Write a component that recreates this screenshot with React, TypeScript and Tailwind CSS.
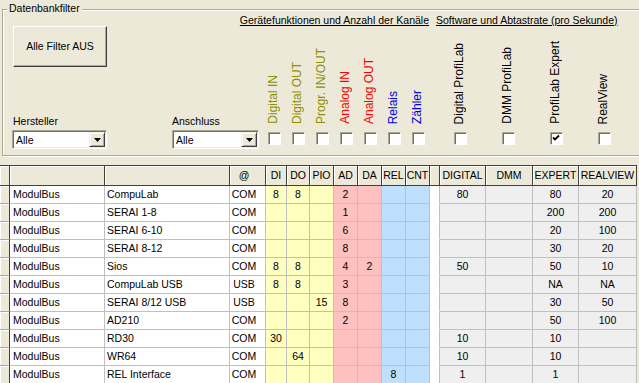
import React from "react";

type Channel = { label: string; color: string; checked?: boolean };

const hwChannels: Channel[] = [
  { label: "Digital IN", color: "text-[#8f8f00]" },
  { label: "Digital OUT", color: "text-[#8f8f00]" },
  { label: "Progr. IN/OUT", color: "text-[#8f8f00]" },
  { label: "Analog IN", color: "text-[#ff0000]" },
  { label: "Analog OUT", color: "text-[#ff0000]" },
  { label: "Relais", color: "text-[#0000e0]" },
  { label: "Zähler", color: "text-[#0000e0]" },
];

const swChannels: Channel[] = [
  { label: "Digital ProfiLab", color: "text-black" },
  { label: "DMM ProfiLab", color: "text-black" },
  { label: "ProfiLab Expert", color: "text-black", checked: true },
  { label: "RealView", color: "text-black" },
];

const headers = ["", "", "@", "DI", "DO", "PIO", "AD", "DA", "REL", "CNT", "", "DIGITAL", "DMM", "EXPERT", "REALVIEW"];

// one entry per data column (selector column not included)
const cellCls = [
  "bg-white justify-start pl-[3px]",
  "bg-white justify-start pl-[2px]",
  "bg-white justify-center pr-[7px]",
  "bg-[#ffffc0] justify-center",
  "bg-[#ffffc0] justify-center",
  "bg-[#ffffc0] justify-center",
  "bg-[#ffc0c0] justify-center",
  "bg-[#ffc0c0] justify-center",
  "bg-[#bfdfff] justify-center",
  "bg-[#bfdfff] justify-center",
  "bg-white border-b-white",
  "bg-[#efefef] justify-center",
  "bg-[#efefef] justify-center",
  "bg-[#efefef] justify-center",
  "bg-[#efefef] justify-center",
];

const rows: string[][] = [
  ["ModulBus", "CompuLab", "COM", "8", "8", "", "2", "", "", "", "", "80", "", "80", "20"],
  ["ModulBus", "SERAI 1-8", "COM", "", "", "", "1", "", "", "", "", "", "", "200", "200"],
  ["ModulBus", "SERAI 6-10", "COM", "", "", "", "6", "", "", "", "", "", "", "20", "100"],
  ["ModulBus", "SERAI 8-12", "COM", "", "", "", "8", "", "", "", "", "", "", "30", "20"],
  ["ModulBus", "Sios", "COM", "8", "8", "", "4", "2", "", "", "", "50", "", "50", "10"],
  ["ModulBus", "CompuLab USB", "USB", "8", "8", "", "3", "", "", "", "", "", "", "NA", "NA"],
  ["ModulBus", "SERAI 8/12 USB", "USB", "", "", "15", "8", "", "", "", "", "", "", "30", "50"],
  ["ModulBus", "AD210", "COM", "", "", "", "2", "", "", "", "", "", "", "50", "100"],
  ["ModulBus", "RD30", "COM", "30", "", "", "", "", "", "", "", "10", "", "10", ""],
  ["ModulBus", "WR64", "COM", "", "64", "", "", "", "", "", "", "10", "", "10", ""],
  ["ModulBus", "REL Interface", "COM", "", "", "", "", "", "8", "", "", "1", "", "1", ""],
];

const CheckBox = ({ checked }: { checked?: boolean }) => (
  <div className="h-[13px] w-[13px] border border-t-[#aca899] border-l-[#aca899] border-r-white border-b-white bg-white shadow-[inset_1px_1px_0_#716f64]">
    {checked && (
      <svg width="11" height="11" viewBox="0 0 11 11">
        <polyline points="2,4.5 4,6.5 8,2.5" fill="none" stroke="black" strokeWidth="1.8" />
      </svg>
    )}
  </div>
);

const Combo = ({ width }: { width: string }) => (
  <div
    className={`flex h-[19px] ${width} border border-t-[#aca899] border-l-[#aca899] border-r-white border-b-white bg-white shadow-[inset_1px_1px_0_#716f64,inset_-1px_-1px_0_#f1efe2]`}
  >
    <span className="pl-[3px] pt-[1px] leading-[16px]">Alle</span>
    <div className="m-[1px] ml-auto flex w-[16px] items-center justify-center border border-t-[#f1efe2] border-l-[#f1efe2] border-r-[#404040] border-b-[#404040] bg-[#ece9d8] shadow-[inset_1px_1px_0_#fff,inset_-1px_-1px_0_#aca899]">
      <svg width="7" height="4" viewBox="0 0 7 4">
        <polygon points="0,0 7,0 3.5,4" fill="black" />
      </svg>
    </div>
  </div>
);

const ChannelCell = ({ c, width }: { c: Channel; width: string }) => (
  <div className={`flex ${width} flex-col`}>
    <div className="flex h-[105px] items-end pb-[8px]">
      <span
        className={`-ml-[2px] rotate-180 whitespace-nowrap text-[12px] leading-[14px] [writing-mode:vertical-rl] ${c.color}`}
      >
        {c.label}
      </span>
    </div>
    <CheckBox checked={c.checked} />
  </div>
);

export default function App() {
  return (
    <div className="flex h-[383px] w-[639px] flex-col overflow-hidden bg-[#ece9d8] pt-[9px] font-['Liberation_Sans',Arial,sans-serif] text-[10.5px] text-black">
      {/* Datenbankfilter */}
      <div className="relative ml-[2px] h-[147px] w-[660px] shrink-0 border border-[#aca899] shadow-[inset_1px_1px_0_#fff,1px_1px_0_#fff]">
        <span className="absolute -top-[8px] left-[4px] bg-[#ece9d8] px-[2px] leading-[13px]">Datenbankfilter</span>
        <div className="flex h-full">
          <div className="flex w-[265px] shrink-0 flex-col">
            <div className="ml-[10px] mt-[16px] flex h-[41px] w-[94px] items-center justify-center border border-t-white border-l-white border-r-[#404040] border-b-[#404040] shadow-[inset_-1px_-1px_0_#aca899]">
              Alle Filter AUS
            </div>
            <div className="mt-[48px] flex">
              <div className="ml-[9px] flex w-[95px] flex-col">
                <span className="h-[13px] pl-[1px] leading-[13px]">Hersteller</span>
                <div className="mt-[2px]">
                  <Combo width="w-[95px]" />
                </div>
              </div>
              <div className="ml-[65px] flex w-[87px] flex-col">
                <span className="h-[13px] leading-[13px]">Anschluss</span>
                <div className="mt-[2px]">
                  <Combo width="w-[87px]" />
                </div>
              </div>
            </div>
          </div>

          <div className="flex w-[168px] shrink-0 flex-col">
            <div className="mt-[4px] flex h-[13px] justify-end whitespace-nowrap pr-[7px] leading-[13px]">
              <span className="underline">Gerätefunktionen und Anzahl der Kanäle</span>
            </div>
            <div className="flex">
              {hwChannels.map((c) => (
                <ChannelCell key={c.label} c={c} width="w-[24px]" />
              ))}
            </div>
          </div>

          <div className="flex flex-col">
            <div className="mt-[4px] h-[13px] whitespace-nowrap leading-[13px]">
              <span className="underline">Software und Abtastrate (pro Sekunde)</span>
            </div>
            <div className="ml-[18px] flex">
              {swChannels.map((c) => (
                <ChannelCell key={c.label} c={c} width="w-[48px]" />
              ))}
            </div>
          </div>
        </div>
      </div>

      {/* Tabelle */}
      <div className="mt-[9px] grid w-[637px] shrink-0 grid-cols-[10px_95px_125px_36px_21px_23px_24px_24px_24px_24px_24px_10px_46px_47px_46px_58px] border-t border-[#404040]">
        <div className="h-[20px] border-r border-b border-[#404040] bg-[#ece9d8] shadow-[inset_1px_1px_0_#fff]" />
        {headers.map((h, i) => (
          <div
            key={i}
            className={`flex h-[20px] items-center justify-center border-r border-b border-[#404040] bg-[#ece9d8] shadow-[inset_1px_1px_0_#fff] ${i === 2 ? "pr-[7px]" : ""}`}
          >
            {h}
          </div>
        ))}
        {rows.map((r, ri) => (
          <React.Fragment key={ri}>
            <div className="h-[18px] border-r border-b border-r-[#404040] border-b-[#aca899] bg-[#ece9d8] shadow-[inset_1px_1px_0_#fff]" />
            {r.map((v, ci) => (
              <div
                key={ci}
                className={`flex h-[18px] items-center overflow-hidden whitespace-nowrap border-r border-b border-[#c0c0c0] ${cellCls[ci]}`}
              >
                {v}
              </div>
            ))}
          </React.Fragment>
        ))}
      </div>
    </div>
  );
}
